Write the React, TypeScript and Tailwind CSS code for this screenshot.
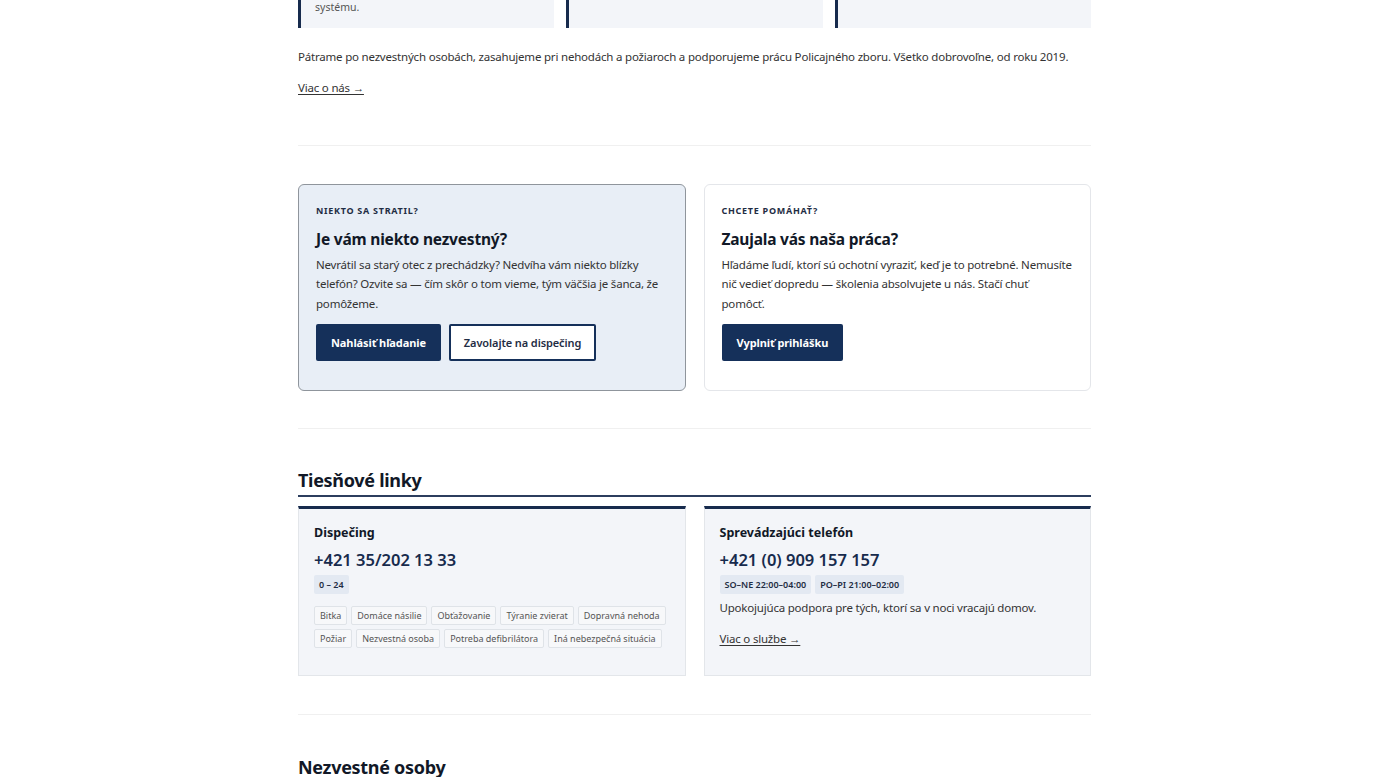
import * as React from 'react'

const navy = 'text-[#172b4d]'
const body = 'text-[11.5px] tracking-[-0.2px] text-[#333]'

export default function App() {
  const cardsRef = React.useRef<HTMLDivElement | null>(null)

  React.useLayoutEffect(() => {
    const el = cardsRef.current
    if (!el) return
    const r = el.getBoundingClientRect()
    window.scrollTo(0, r.bottom + window.scrollY - 28)
  }, [])

  return (
    <div className="min-h-screen bg-white pr-[11px] text-[#222] font-['Noto_Sans',sans-serif]">
      <div className="mx-auto w-[793px]">
        {/* O nás */}
        <section className="pt-16">
          <div className="text-[10px] font-bold uppercase tracking-[0.08em] text-[#1f2d44]">O nás</div>
          <h2 className="mt-3 text-[26px] font-bold tracking-[-0.3px] text-[#111827]">Dobrovoľný záchranný tím</h2>
          <p className={`mt-4 max-w-[600px] leading-[1.7] ${body}`}>
            Sme skupina dobrovoľníkov, ktorí pomáhajú v núdzových situáciách v našom regióne.
            Spolupracujeme so záchrannými zložkami a sme pripravení vyraziť kedykoľvek.
          </p>
          <div className="mt-10 h-[300px] rounded-md bg-[#f3f5f9]" />
          <div ref={cardsRef} className="mt-10 grid grid-cols-3 gap-3">
            <Feature title="Pátranie">
              Koordinované pátranie po nezvestných osobách v teréne aj v meste, v spolupráci so zložkami integrovaného záchranného
              <br />
              systému.
            </Feature>
            <Feature title="Zásahy">Prvá pomoc pri nehodách a požiaroch do príchodu profesionálnych zložiek.</Feature>
            <Feature title="Podpora">Pomáhame Policajnému zboru pri hliadkach a podujatiach.</Feature>
          </div>
        </section>

        <p className={`mt-[19px] leading-[20px] ${body}`}>
          Pátrame po nezvestných osobách, zasahujeme pri nehodách a požiaroch a podporujeme prácu Policajného zboru. Všetko dobrovoľne, od roku 2019.
        </p>
        <a href="#" className={`mt-[11px] inline-block leading-[20px] underline underline-offset-2 ${body}`}>
          Viac o nás →
        </a>

        <hr className="mt-[47px] border-[#f0f0f0]" />

        {/* Výzvy */}
        <section className="mt-[38px] grid grid-cols-2 gap-[18px]">
          <div className="rounded-[6px] border border-[#8f959c] bg-[#e8eef6] px-[17px] pt-[19px] pb-[29px]">
            <Eyebrow>Niekto sa stratil?</Eyebrow>
            <h3 className="mt-[9px] text-[15.5px] font-bold leading-[24px] tracking-[-0.2px] text-[#111827]">Je vám niekto nezvestný?</h3>
            <p className={`mt-[4px] leading-[19.5px] ${body}`}>
              Nevrátil sa starý otec z prechádzky? Nedvíha vám niekto blízky telefón? Ozvite sa — čím skôr o tom vieme, tým väčšia je šanca, že pomôžeme.
            </p>
            <div className="mt-[11px] flex gap-2">
              <a href="#" className="flex h-[37px] items-center rounded-[2px] bg-[#15305a] px-[15px] text-[11px] font-bold tracking-[-0.1px] text-white">
                Nahlásiť hľadanie
              </a>
              <a href="#" className="flex h-[37px] items-center rounded-[2px] border-2 border-[#15305a] bg-white px-[13px] text-[11px] font-semibold tracking-[-0.1px] text-[#1f2d44]">
                Zavolajte na dispečing
              </a>
            </div>
          </div>
          <div className="rounded-[6px] border border-[#e4e6ea] bg-white px-[17px] pt-[19px] pb-[29px]">
            <Eyebrow>Chcete pomáhať?</Eyebrow>
            <h3 className="mt-[9px] text-[15.5px] font-bold leading-[24px] tracking-[-0.2px] text-[#111827]">Zaujala vás naša práca?</h3>
            <p className={`mt-[4px] leading-[19.5px] ${body}`}>
              Hľadáme ľudí, ktorí sú ochotní vyraziť, keď je to potrebné. Nemusíte nič vedieť dopredu — školenia absolvujete u nás. Stačí chuť pomôcť.
            </p>
            <div className="mt-[11px] flex gap-2">
              <a href="#" className="flex h-[37px] items-center rounded-[2px] bg-[#15305a] px-[15px] text-[11px] font-bold tracking-[-0.1px] text-white">
                Vyplniť prihlášku
              </a>
            </div>
          </div>
        </section>

        <hr className="mt-[37px] border-[#f0f0f0]" />

        {/* Tiesňové linky */}
        <section className="mt-[37px]">
          <h2 className="border-b-2 border-[#2c3e5e] pb-[1px] text-[18px] font-bold leading-[28px] tracking-[-0.3px] text-[#111827]">Tiesňové linky</h2>
          <div className="mt-[9px] grid grid-cols-2 gap-[18px]">
            <Line title="Dispečing" phone="+421 35/202 13 33" hours={['0 – 24']}>
              <div className="mt-[12px] flex flex-wrap gap-[4px]">
                {['Bitka', 'Domáce násilie', 'Obťažovanie', 'Týranie zvierat', 'Dopravná nehoda', 'Požiar', 'Nezvestná osoba', 'Potreba defibrilátora', 'Iná nebezpečná situácia'].map((t) => (
                  <span key={t} className="rounded-[2px] border border-[#dfe3e8] bg-[#f7f8fa] px-[5px] py-[2px] text-[9px] leading-[13px] text-[#555]">
                    {t}
                  </span>
                ))}
              </div>
            </Line>
            <Line title="Sprevádzajúci telefón" phone="+421 (0) 909 157 157" hours={['SO–NE 22:00–04:00', 'PO–PI 21:00–02:00']}>
              <p className={`mt-[4px] leading-[19px] ${body}`}>Upokojujúca podpora pre tých, ktorí sa v noci vracajú domov.</p>
              <a href="#" className={`mt-[12px] inline-block leading-[19px] underline underline-offset-2 ${body}`}>
                Viac o službe →
              </a>
            </Line>
          </div>
        </section>

        <hr className="mt-[38px] border-[#f0f0f0]" />

        {/* Nezvestné osoby */}
        <section className="mt-[38px] pb-24">
          <h2 className="text-[18px] font-bold leading-[28px] tracking-[-0.3px] text-[#111827]">Nezvestné osoby</h2>
          <div className="mt-6 grid grid-cols-3 gap-4">
            {[0, 1, 2, 3, 4, 5].map((i) => (
              <div key={i} className="h-[320px] rounded-md border border-[#e4e6ea] bg-[#f3f5f9]" />
            ))}
          </div>
        </section>

        <footer className="border-t border-[#f0f0f0] py-10 text-[11px] text-[#666]">
          © 2025 Dobrovoľný záchranný tím
        </footer>
      </div>
    </div>
  )
}

function Feature(props: { title: string; children: React.ReactNode }) {
  return (
    <div className="border-l-[3px] border-[#172b4d] bg-[#f3f5f9] px-[14px] pt-4 pb-[12px]">
      <div className={`text-[12.5px] font-bold ${navy}`}>{props.title}</div>
      <p className="mt-2 text-[10.5px] leading-[18px] text-[#555]">{props.children}</p>
    </div>
  )
}

function Eyebrow(props: { children: React.ReactNode }) {
  return (
    <div className="text-[9px] font-bold uppercase leading-[14px] tracking-[0.08em] text-[#1f2d44]">
      {props.children}
    </div>
  )
}

function Line(props: { title: string; phone: string; hours: string[]; children: React.ReactNode }) {
  return (
    <div className="border border-t-[3px] border-[#e3e6ea] border-t-[#172b4d] bg-[#f3f5f9] px-[15px] pt-[14px] pb-[26px]">
      <div className="text-[12.5px] font-bold leading-[20px] text-[#111827]">{props.title}</div>
      <div className={`mt-[5px] text-[16.5px] font-semibold leading-[24px] ${navy}`}>{props.phone}</div>
      <div className="mt-[3px] flex gap-[4px]">
        {props.hours.map((h) => (
          <span key={h} className="rounded-[2px] bg-[#e3e9f2] px-[5px] py-[3px] text-[9px] font-semibold leading-[13px] text-[#1f2d44]">
            {h}
          </span>
        ))}
      </div>
      {props.children}
    </div>
  )
}
